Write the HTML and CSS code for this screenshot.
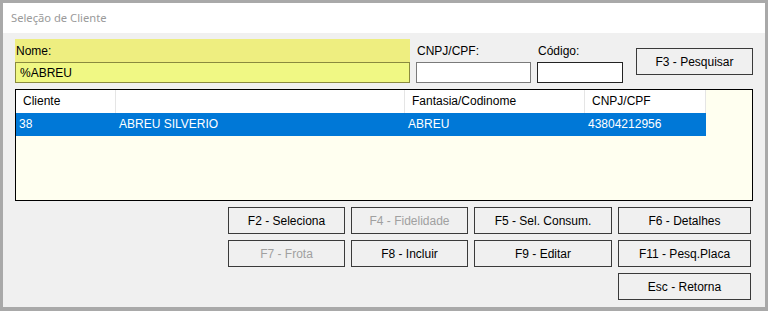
FILE: index.html
```html
<!DOCTYPE html>
<html lang="pt-BR">
<head>
    <meta charset="UTF-8">
    <title>Seleção de Cliente</title>
    <link rel="stylesheet" href="styles.css">
</head>
<body>

<div class="window">
    <div class="titlebar">Seleção de Cliente</div>

    <div class="content">
        <!-- Filtros de busca -->
        <div class="search-row">
            <div class="field field-nome">
                <label for="nome">Nome:</label>
                <input type="text" id="nome" value="%ABREU">
            </div>
            <div class="field field-cnpj">
                <label for="cnpj">CNPJ/CPF:</label>
                <input type="text" id="cnpj">
            </div>
            <div class="field field-codigo">
                <label for="codigo">Código:</label>
                <input type="text" id="codigo">
            </div>
            <button class="btn btn-search">F3 - Pesquisar</button>
        </div>

        <!-- Resultado -->
        <div class="grid">
            <div class="grid-row grid-head">
                <div class="col col-cliente">Cliente</div>
                <div class="col col-nome"></div>
                <div class="col col-fantasia">Fantasia/Codinome</div>
                <div class="col col-doc">CNPJ/CPF</div>
            </div>
            <div class="grid-row grid-selected">
                <div class="col col-cliente">38</div>
                <div class="col col-nome">ABREU SILVERIO</div>
                <div class="col col-fantasia">ABREU</div>
                <div class="col col-doc">43804212956</div>
            </div>
        </div>

        <!-- Ações -->
        <div class="actions">
            <button class="btn">F2 - Seleciona</button>
            <button class="btn" disabled>F4 - Fidelidade</button>
            <button class="btn">F5 - Sel. Consum.</button>
            <button class="btn">F6 - Detalhes</button>
            <button class="btn" disabled>F7 - Frota</button>
            <button class="btn">F8 - Incluir</button>
            <button class="btn">F9 - Editar</button>
            <button class="btn">F11 - Pesq.Placa</button>
            <button class="btn btn-esc">Esc - Retorna</button>
        </div>
    </div>
</div>

</body>
</html>
```

FILE: styles.css
```css
body {
    margin: 0;
    padding: 0;
    background-color: #a9a9a9;
    font-family: "Liberation Sans", Arial, sans-serif;
    font-size: 12px;
    color: #000;
}

.window {
    margin: 3px 3px 0 3px;
    height: 304px;
    background-color: #f0f0f0;
    display: flex;
    flex-direction: column;
}

.titlebar {
    height: 30px;
    line-height: 30px;
    background-color: #fff;
    padding-left: 8px;
    font-family: "Noto Sans", "Open Sans", sans-serif;
    font-size: 11.2px;
    color: #9a9a9a;
}

.content {
    padding: 6px 12px 0 12px;
}

/* Search row */
.search-row {
    display: flex;
    align-items: flex-start;
}

.field {
    display: flex;
    flex-direction: column;
    margin-right: 6px;
}

.field label {
    height: 22px;
    line-height: 22px;
    padding-left: 1px;
}

.field input {
    box-sizing: border-box;
    height: 21px;
    margin: 0;
    padding: 0 4px;
    border: 1px solid #7a7a7a;
    background-color: #fff;
    font-family: "Liberation Sans", Arial, sans-serif;
    font-size: 12px;
    outline: none;
}

.field-nome {
    width: 395px;
    background-color: #eeee80;
}

.field-nome label {
    padding-top: 1px;
}

.field-nome input {
    width: 395px;
    background-color: #f0f884;
    border-color: #8a8a3e;
}

.field-cnpj {
    padding-top: 1px;
}

.field-cnpj input {
    width: 115px;
}

.field-codigo {
    padding-top: 1px;
}

.field-codigo input {
    width: 86px;
    border-color: #222;
}

.btn {
    box-sizing: border-box;
    height: 27px;
    margin: 0;
    padding: 0;
    border: 1px solid #3a3a3a;
    background-color: #f0f0f0;
    font-family: "Liberation Sans", Arial, sans-serif;
    font-size: 12px;
    color: #000;
}

.btn:disabled {
    color: #a0a0a0;
}

.btn-search {
    width: 117px;
    margin-top: 9px;
    margin-left: 7px;
}

/* Grid */
.grid {
    box-sizing: border-box;
    margin-top: 6px;
    width: 738px;
    height: 112px;
    border: 1px solid #000;
    background-color: #fffff0;
}

.grid-row {
    display: flex;
    width: 690px;
    height: 23px;
}

.col {
    box-sizing: border-box;
    line-height: 23px;
    white-space: nowrap;
}

.col-cliente { width: 100px; }
.col-nome { width: 289px; }
.col-fantasia { width: 180px; }
.col-doc { width: 121px; }

.grid-head {
    background-color: #fff;
}

.grid-head .col {
    padding-left: 7px;
    border-right: 1px solid #e5e5e5;
}

.grid-selected {
    background-color: #0078d7;
    color: #fff;
}

.grid-selected .col {
    padding-left: 3px;
}

/* Action buttons */
.actions {
    margin-top: 6px;
    margin-left: 213px;
    width: 525px;
    display: grid;
    grid-template-columns: 117px 117px 138px 133px;
    column-gap: 6px;
    row-gap: 6px;
}

.btn-esc {
    grid-column: 4;
}
```
